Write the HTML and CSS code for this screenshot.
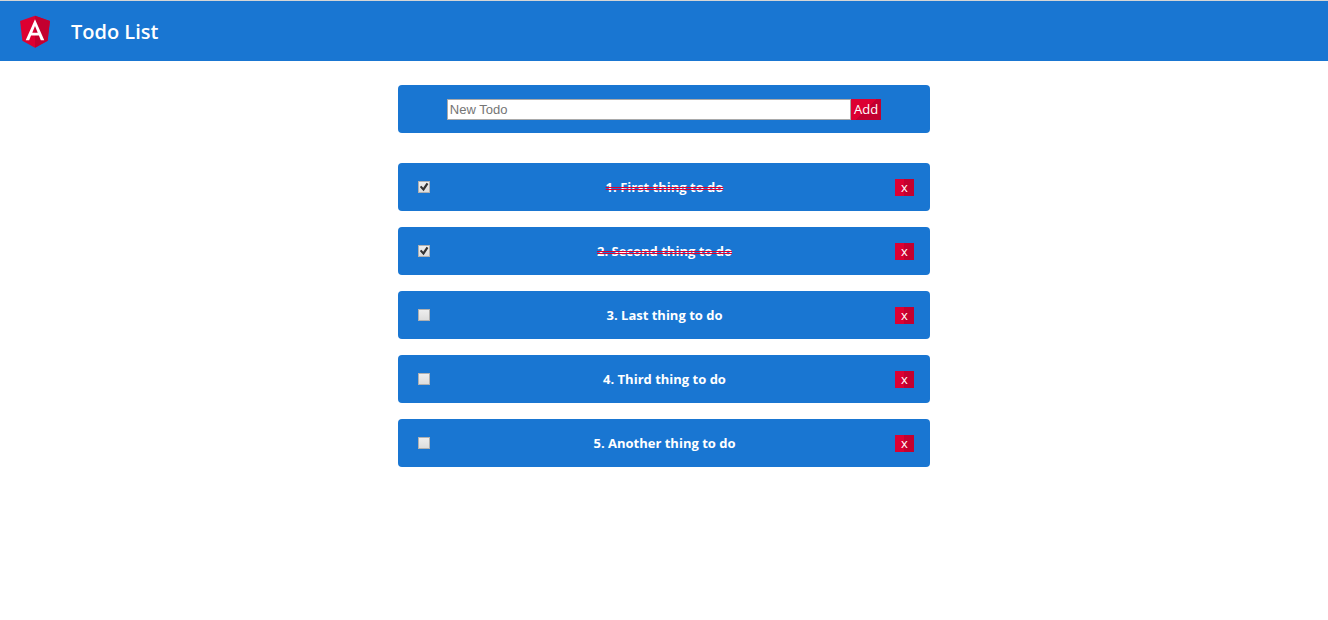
FILE: index.html
```html
<!DOCTYPE html>
<html lang="en">
<head>
<meta charset="utf-8">
<meta name="viewport" content="width=device-width, initial-scale=1">
<title>Todo List</title>
<link rel="stylesheet" href="styles.css">
</head>
<body>
<header class="toolbar">
  <svg class="logo" viewBox="0 0 250 250" role="img" aria-label="Angular">
    <path fill="#dd0031" d="M125 30 31.900 63.200 46.100 186.300 125 230 203.900 186.300 218.100 63.200z"/>
    <path fill="#c3002f" d="M125 30v200l78.900-43.700 14.200-123.100z"/>
    <path fill="#fff" d="M125 52.100 66.800 182.600h21.700l11.700-29.200h49.400l11.700 29.200H183zm17 83.300h-34l17-40.900z"/>
  </svg>
  <h1 class="title">Todo List</h1>
</header>
<main class="content">
  <form class="card new-todo">
    <input class="field" type="text" placeholder="New Todo" aria-label="New Todo">
    <button class="button add" type="button">Add</button>
  </form>
  <ul class="todos">
    <li class="card todo">
      <input class="check" type="checkbox" id="todo-1" checked>
      <label class="text" for="todo-1">1. First thing to do</label>
      <button class="button remove" type="button" aria-label="Remove first">x</button>
    </li>
    <li class="card todo">
      <input class="check" type="checkbox" id="todo-2" checked>
      <label class="text" for="todo-2">2. Second thing to do</label>
      <button class="button remove" type="button" aria-label="Remove second">x</button>
    </li>
    <li class="card todo">
      <input class="check" type="checkbox" id="todo-3">
      <label class="text" for="todo-3">3. Last thing to do</label>
      <button class="button remove" type="button" aria-label="Remove third">x</button>
    </li>
    <li class="card todo">
      <input class="check" type="checkbox" id="todo-4">
      <label class="text" for="todo-4">4. Third thing to do</label>
      <button class="button remove" type="button" aria-label="Remove fourth">x</button>
    </li>
    <li class="card todo">
      <input class="check" type="checkbox" id="todo-5">
      <label class="text" for="todo-5">5. Another thing to do</label>
      <button class="button remove" type="button" aria-label="Remove fifth">x</button>
    </li>
  </ul>
</main>
</body>
</html>
```
FILE: styles.css
```css
* {
  box-sizing: border-box;
}

body {
  margin: 0;
  background: #fff;
  color: #fff;
  font-family: "Segoe UI", "Open Sans", "Noto Sans", sans-serif;
  font-size: 13px;
}

.toolbar {
  display: flex;
  align-items: center;
  gap: 16px;
  height: 61px;
  padding-left: 15px;
  border-top: 1px solid #d5d5d5;
  background: #1976d2;
}

.logo {
  width: 40px;
  height: 40px;
}

.title {
  margin: 0;
  padding-top: 2px;
  font-size: 20px;
  line-height: 28px;
  font-weight: 600;
}

.content {
  display: flex;
  flex-direction: column;
  gap: 30px;
  max-width: 532px;
  margin: 0 auto;
  padding: 24px 0;
}

.card {
  display: flex;
  align-items: center;
  height: 48px;
  border-radius: 4px;
  background: #1976d2;
}

.new-todo {
  justify-content: center;
}

.field {
  width: 76%;
  height: 21px;
  padding: 1px 2px;
  border: 1px solid #a9a9a9;
  border-radius: 0;
  background: #fff;
  color: #222;
  font-family: "Liberation Sans", Arial, sans-serif;
  font-size: 13px;
}

.field::placeholder {
  color: #757575;
}

.button {
  padding: 0;
  border: 0;
  background: linear-gradient(to right, #dd0031 50%, #c3002f 50%);
  color: #fff;
  font-family: inherit;
  font-size: 13px;
  font-weight: 500;
  line-height: 17px;
}

.add {
  width: 30px;
  height: 21px;
  background: linear-gradient(135deg, #dd0031 50%, #c3002f 50%);
}

.remove {
  width: 19px;
  height: 17px;
}

.todos {
  display: flex;
  flex-direction: column;
  gap: 16px;
  margin: 0;
  padding: 0;
  list-style: none;
}

.todo {
  padding: 0 16px 0 20px;
}

.check {
  display: grid;
  place-items: center;
  appearance: none;
  width: 12px;
  height: 12px;
  margin: 0;
  border: 1px solid #b0b0b0;
  background: linear-gradient(#eee, #ddd);
}

.check:checked::before {
  content: "";
  width: 10px;
  height: 10px;
  background: #333;
  clip-path: polygon(8% 50%, 24% 38%, 42% 58%, 76% 8%, 94% 20%, 46% 92%);
}

.text {
  flex: 1;
  padding-left: 4px;
  text-align: center;
  font-weight: 700;
  line-height: 20px;
}

.check:checked + .text {
  text-decoration: line-through double #dd0031 1px;
}
```
